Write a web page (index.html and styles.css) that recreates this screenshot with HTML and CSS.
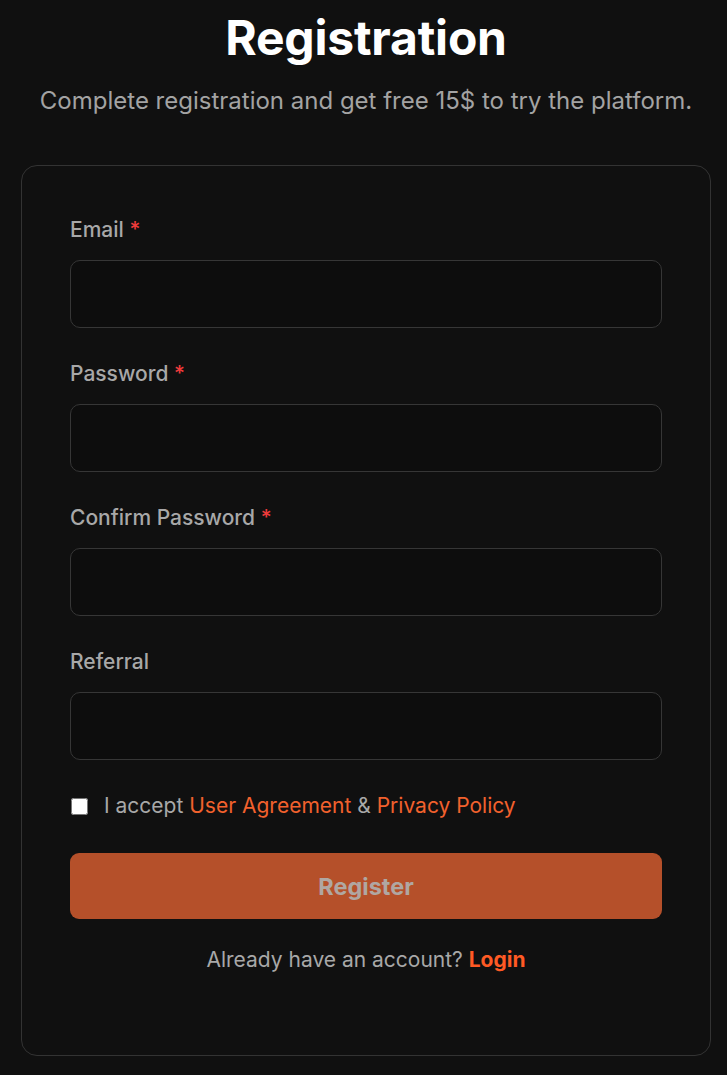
FILE: index.html
```html
<!DOCTYPE html>
<html>
<head>
<meta charset="utf-8">
<link rel="stylesheet" href="styles.css">
</head>
<body>
<main class="page">
  <h1 class="title">Registration</h1>
  <p class="subtitle">Complete registration and get free 15$ to try the platform.</p>
  <form class="card">
    <div class="field">
      <label class="label">Email <span class="req">*</span></label>
      <input class="input" type="email">
    </div>
    <div class="field">
      <label class="label">Password <span class="req">*</span></label>
      <input class="input" type="password">
    </div>
    <div class="field">
      <label class="label">Confirm Password <span class="req">*</span></label>
      <input class="input" type="password">
    </div>
    <div class="field">
      <label class="label">Referral</label>
      <input class="input" type="text">
    </div>
    <div class="accept">
      <input class="check" type="checkbox">
      <span>I accept <a class="link">User Agreement</a> &amp; <a class="link">Privacy Policy</a></span>
    </div>
    <button class="btn" type="button">Register</button>
    <p class="already">Already have an account? <a class="login">Login</a></p>
  </form>
</main>
</body>
</html>
```

FILE: styles.css
```css
html, body {
  margin: 0;
  padding: 0;
  background: #101010;
}
body {
  font-family: Inter, "Noto Sans", sans-serif;
  color: #a8a8a8;
}
.page {
  padding: 0 16px 20px 21px;
  display: flex;
  flex-direction: column;
}
.title {
  margin: 0;
  padding-top: 9px;
  font-size: 48px;
  line-height: 58px;
  font-weight: 700;
  color: #ffffff;
  text-align: center;
  letter-spacing: -0.2px;
}
.subtitle {
  margin: 18px 0 0;
  font-size: 24px;
  line-height: 32px;
  text-align: center;
  color: #a3a3a3;
}
.card {
  margin-top: 48px;
  border: 1px solid #333333;
  border-radius: 16px;
  padding: 50px 48px 81px;
  display: flex;
  flex-direction: column;
}
.field {
  display: flex;
  flex-direction: column;
  margin-bottom: 32px;
}
.label {
  font-size: 21px;
  line-height: 28px;
  font-weight: 500;
  color: #a8a8a8;
  margin-bottom: 16px;
}
.req {
  color: #ef3b3b;
}
.input {
  box-sizing: border-box;
  height: 68px;
  width: 100%;
  background: #0d0d0d;
  border: 1px solid #363636;
  border-radius: 10px;
  margin: 0;
  padding: 0 16px;
  color: #ddd;
  font: inherit;
}
.accept {
  display: flex;
  align-items: center;
  gap: 16px;
  font-size: 21px;
  line-height: 28px;
  color: #a8a8a8;
  padding-left: 1px;
}
.check {
  width: 17px;
  height: 17px;
  margin: 0;
}
.link {
  color: #f2612d;
}
.btn {
  margin-top: 33px;
  height: 66px;
  border: none;
  border-radius: 9px;
  background: #b5502a;
  color: #b0a7a2;
  font-family: inherit;
  font-size: 23.5px;
  font-weight: 700;
}
.already {
  margin: 27px 0 0;
  font-size: 21px;
  line-height: 28px;
  text-align: center;
  color: #a8a8a8;
}
.login {
  color: #ff5a24;
  font-weight: 700;
}
```
